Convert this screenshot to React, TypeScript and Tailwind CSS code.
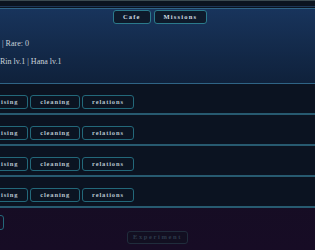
const tasks = ["cleaning", "relations"];

const RowButton = ({ label, className = "" }: { label: string; className?: string }) => (
  <button
    className={`h-[14px] px-[9px] rounded-[3px] border border-[#23687a] bg-[#0b1422] text-[6.5px] font-bold leading-none tracking-[0.13em] text-[#b9c6cf] ${className}`}
  >
    {label}
  </button>
);

const NavButton = ({ label }: { label: string }) => (
  <button className="h-[14px] px-[9px] rounded-[3px] border border-[#2b7a8c] bg-[#0e1a2b] text-[6.5px] font-bold leading-none tracking-[0.18em] text-[#d0dae2]">
    {label}
  </button>
);

export default function App() {
  return (
    <div className="w-[315px] h-[250px] overflow-hidden bg-gradient-to-b from-[#110e20] to-[#170c25] font-['Liberation_Serif',serif]">
      <div className="h-px bg-[#3b4a50]" />
      <div className="h-[5px] bg-[#0b1420]" />
      <div className="h-px bg-[#1d3656]" />
      <div className="h-px bg-[#0b1420]" />

      <header className="h-[76px] border-y border-[#2f6486] bg-gradient-to-b from-[#18345c] to-[#0f213b]">
        <nav className="flex justify-center gap-[3px] pt-px pl-[5px]">
          <NavButton label="Cafe" />
          <NavButton label="Missions" />
        </nav>
        <div className="mt-[14px] pl-[2px] text-[8px] leading-[12px] text-[#c9d2da]">| Rare: 0</div>
        <div className="mt-[6px] text-[8px] leading-[12px] text-[#c9d2da]">Rin lv.1 | Hana lv.1</div>
      </header>

      <div className="bg-[#0b1321]">
        {[0, 1, 2, 3].map((i) => (
          <div key={i} className="h-[31px] pt-[11px] border-b-2 border-[#275a70]">
            <div className="flex gap-[2px]">
              <RowButton label="ising" className="-ml-[20px] pl-[20px]" />
              {tasks.map((t) => (
                <RowButton key={t} label={t} />
              ))}
            </div>
          </div>
        ))}
      </div>

      <div className="flex mt-[7px]">
        <button className="w-[40px] h-[15px] -ml-[36px] rounded-[3px] border border-[#23687a]" />
      </div>
      <div className="flex justify-center mt-px">
        <button
          disabled
          className="h-[13px] w-[61px] rounded-[3px] border border-[#202c3c] bg-[#120f21] text-[6.5px] font-bold leading-none tracking-[0.25em] text-[#2d3a4b]"
        >
          Experiment
        </button>
      </div>
    </div>
  );
}
